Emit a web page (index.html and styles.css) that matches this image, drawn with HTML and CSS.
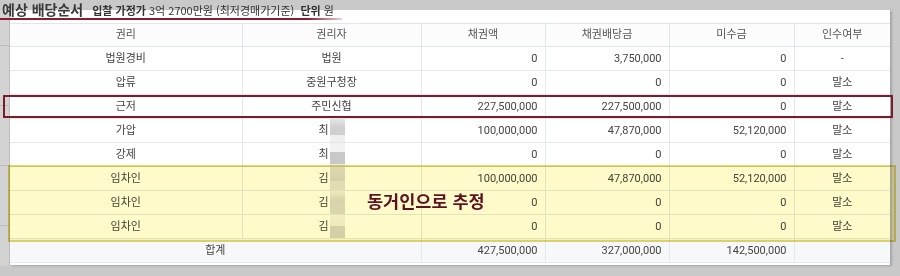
FILE: index.html
```html
<!DOCTYPE html>
<html lang="ko">
<head>
<meta charset="utf-8">
<link rel="stylesheet" href="styles.css">
</head>
<body>
<div class="page">
  <div class="strip"></div>
  <div class="panel">
    <table class="dist">
      <colgroup>
        <col class="c1"><col class="c2"><col class="c3"><col class="c4"><col class="c5"><col class="c6">
      </colgroup>
      <thead>
        <tr><th>권리</th><th>권리자</th><th>채권액</th><th>채권배당금</th><th>미수금</th><th>인수여부</th></tr>
      </thead>
      <tbody>
        <tr><td class="ctr">법원경비</td><td class="ctr">법원</td><td class="num">0</td><td class="num">3,750,000</td><td class="num">0</td><td class="ctr">-</td></tr>
        <tr><td class="ctr">압류</td><td class="ctr">중원구청장</td><td class="num">0</td><td class="num">0</td><td class="num">0</td><td class="ctr">말소</td></tr>
        <tr><td class="ctr">근저</td><td class="ctr">주민신협</td><td class="num">227,500,000</td><td class="num">227,500,000</td><td class="num">0</td><td class="ctr">말소</td></tr>
        <tr><td class="ctr">가압</td><td class="ctr">최<span class="blur b1"></span></td><td class="num">100,000,000</td><td class="num">47,870,000</td><td class="num">52,120,000</td><td class="ctr">말소</td></tr>
        <tr><td class="ctr">강제</td><td class="ctr">최<span class="blur b2"></span></td><td class="num">0</td><td class="num">0</td><td class="num">0</td><td class="ctr">말소</td></tr>
        <tr class="hl"><td class="ctr">임차인</td><td class="ctr">김<span class="blur b3"></span></td><td class="num">100,000,000</td><td class="num">47,870,000</td><td class="num">52,120,000</td><td class="ctr">말소</td></tr>
        <tr class="hl"><td class="ctr">임차인</td><td class="ctr">김<span class="blur b4"></span></td><td class="num">0</td><td class="num">0</td><td class="num">0</td><td class="ctr">말소</td></tr>
        <tr class="hl"><td class="ctr">임차인</td><td class="ctr">김<span class="blur b5"></span></td><td class="num">0</td><td class="num">0</td><td class="num">0</td><td class="ctr">말소</td></tr>
      </tbody>
      <tfoot>
        <tr><td class="ctr" colspan="2">합계</td><td class="num">427,500,000</td><td class="num">327,000,000</td><td class="num">142,500,000</td><td></td></tr>
      </tfoot>
    </table>
  </div>

  <div class="title">
    <span class="big">예상 배당순서</span>
    <span class="info"><b>입찰 가정가</b> 3억 2700만원 (최저경매가기준) <b class="unit">단위</b> 원</span>
  </div>
  <div class="underline"></div>
  <div class="redbox"></div>
  <div class="yellowbox"></div>
  <div class="note">동거인으로 추정</div>
</div>
</body>
</html>
```

FILE: styles.css
```css
html, body {
  margin: 0;
  padding: 0;
}
body {
  background: #c9c9c9;
  width: 900px;
  height: 276px;
  overflow: hidden;
  font-family: Roboto, "Noto Sans CJK KR", sans-serif;
  color: #444;
}
.page {
  position: relative;
  display: flex;
  align-items: flex-start;
  padding-top: 10px;
}
.strip {
  width: 9px;
  height: 256px;
  background: #d3d3d3;
  border-right: 1px solid #bdbdbd;
  background-image: repeating-linear-gradient(to bottom, transparent 0, transparent 35px, #bcbcbc 35px, #bcbcbc 36px, transparent 36px, transparent 60px);
}
.panel {
  width: 880px;
  height: 255px;
  background: #fff;
  box-shadow: 2px 1px 2px rgba(0,0,0,0.18);
  padding-top: 13px;
  box-sizing: border-box;
}
.dist {
  width: 880px;
  border-collapse: collapse;
  table-layout: fixed;
  font-size: 11px;
}
.c1 { width: 232px; }
.c2 { width: 179px; }
.c3 { width: 124px; }
.c4 { width: 124px; }
.c5 { width: 125px; }
.c6 { width: 96px; }
.dist th {
  height: 22px;
  line-height: 22px;
  font-weight: normal;
  color: #555;
  background: #fcfcfc;
  border: 1px solid #e1e6ea;
  border-left: none;
  padding: 0;
}
.dist th + th { border-left: 1px solid #e1e6ea; }
.dist td {
  height: 23px;
  line-height: 23px;
  border: 1px solid #e4e8ec;
  padding: 0 7px;
  color: #444;
  white-space: nowrap;
}
.dist td:first-child { border-left: none; }
.dist th:last-child, .dist td:last-child { border-right: none; }
.ctr { text-align: center; }
.num { text-align: right; }
.dist tfoot td { background: #f6f8fa; }
.blur {
  display: inline-block;
  width: 15px;
  height: 23px;
  vertical-align: top;
  margin-left: 1px;
}
.b1 { background: linear-gradient(to bottom, #e6e6e6 0, #d0d0d0 35%, #cfcfcf 70%, #efefef 70%); }
.b2 { background: linear-gradient(to bottom, #f2f2f2 0, #f2f2f2 40%, #c8c8c8 40%, #c8c8c8 90%, #ececec 90%); }
.b3 { background: linear-gradient(to bottom, #dedede 0, #d4d4d4 60%, #e2e2e2 60%); }
.b4 { background: linear-gradient(to bottom, #f0f0f0 0, #d8d8d8 40%, #dcdcdc 100%); }
.b5 { background: linear-gradient(to bottom, #f3f3f3 0, #eeeeee 50%, #d4d4d4 50%); }

.title {
  position: absolute;
  left: 2px;
  top: 0;
  display: flex;
  align-items: baseline;
  gap: 9px;
  white-space: nowrap;
  font-family: "Noto Sans CJK KR", sans-serif;
  color: #333;
}
.big {
  font-size: 14px;
  font-weight: bold;
  line-height: 18px;
  color: #3a3a3a;
}
.info {
  font-size: 11px;
  color: #333;
}
.info b { font-weight: bold; }
.unit { margin-left: 3px; }
.underline {
  position: absolute;
  left: 0;
  top: 18px;
  width: 342px;
  height: 2px;
  background: linear-gradient(to right, #8a1d2d 0, #8a1d2d 90%, rgba(138,29,45,0.2) 100%);
}
.redbox {
  position: absolute;
  left: 3px;
  top: 95px;
  width: 886px;
  height: 19px;
  border: 2px solid #7e1b2b;
}
.yellowbox {
  position: absolute;
  left: 8px;
  top: 165px;
  width: 884px;
  height: 73px;
  border: 2px solid #e3d66c;
  background: #fefac9;
  mix-blend-mode: multiply;
}
.note {
  position: absolute;
  left: 367px;
  top: 189px;
  font-family: "Noto Sans CJK KR", sans-serif;
  font-size: 17.5px;
  font-weight: bold;
  color: #5c1222;
  line-height: 24px;
}
```
